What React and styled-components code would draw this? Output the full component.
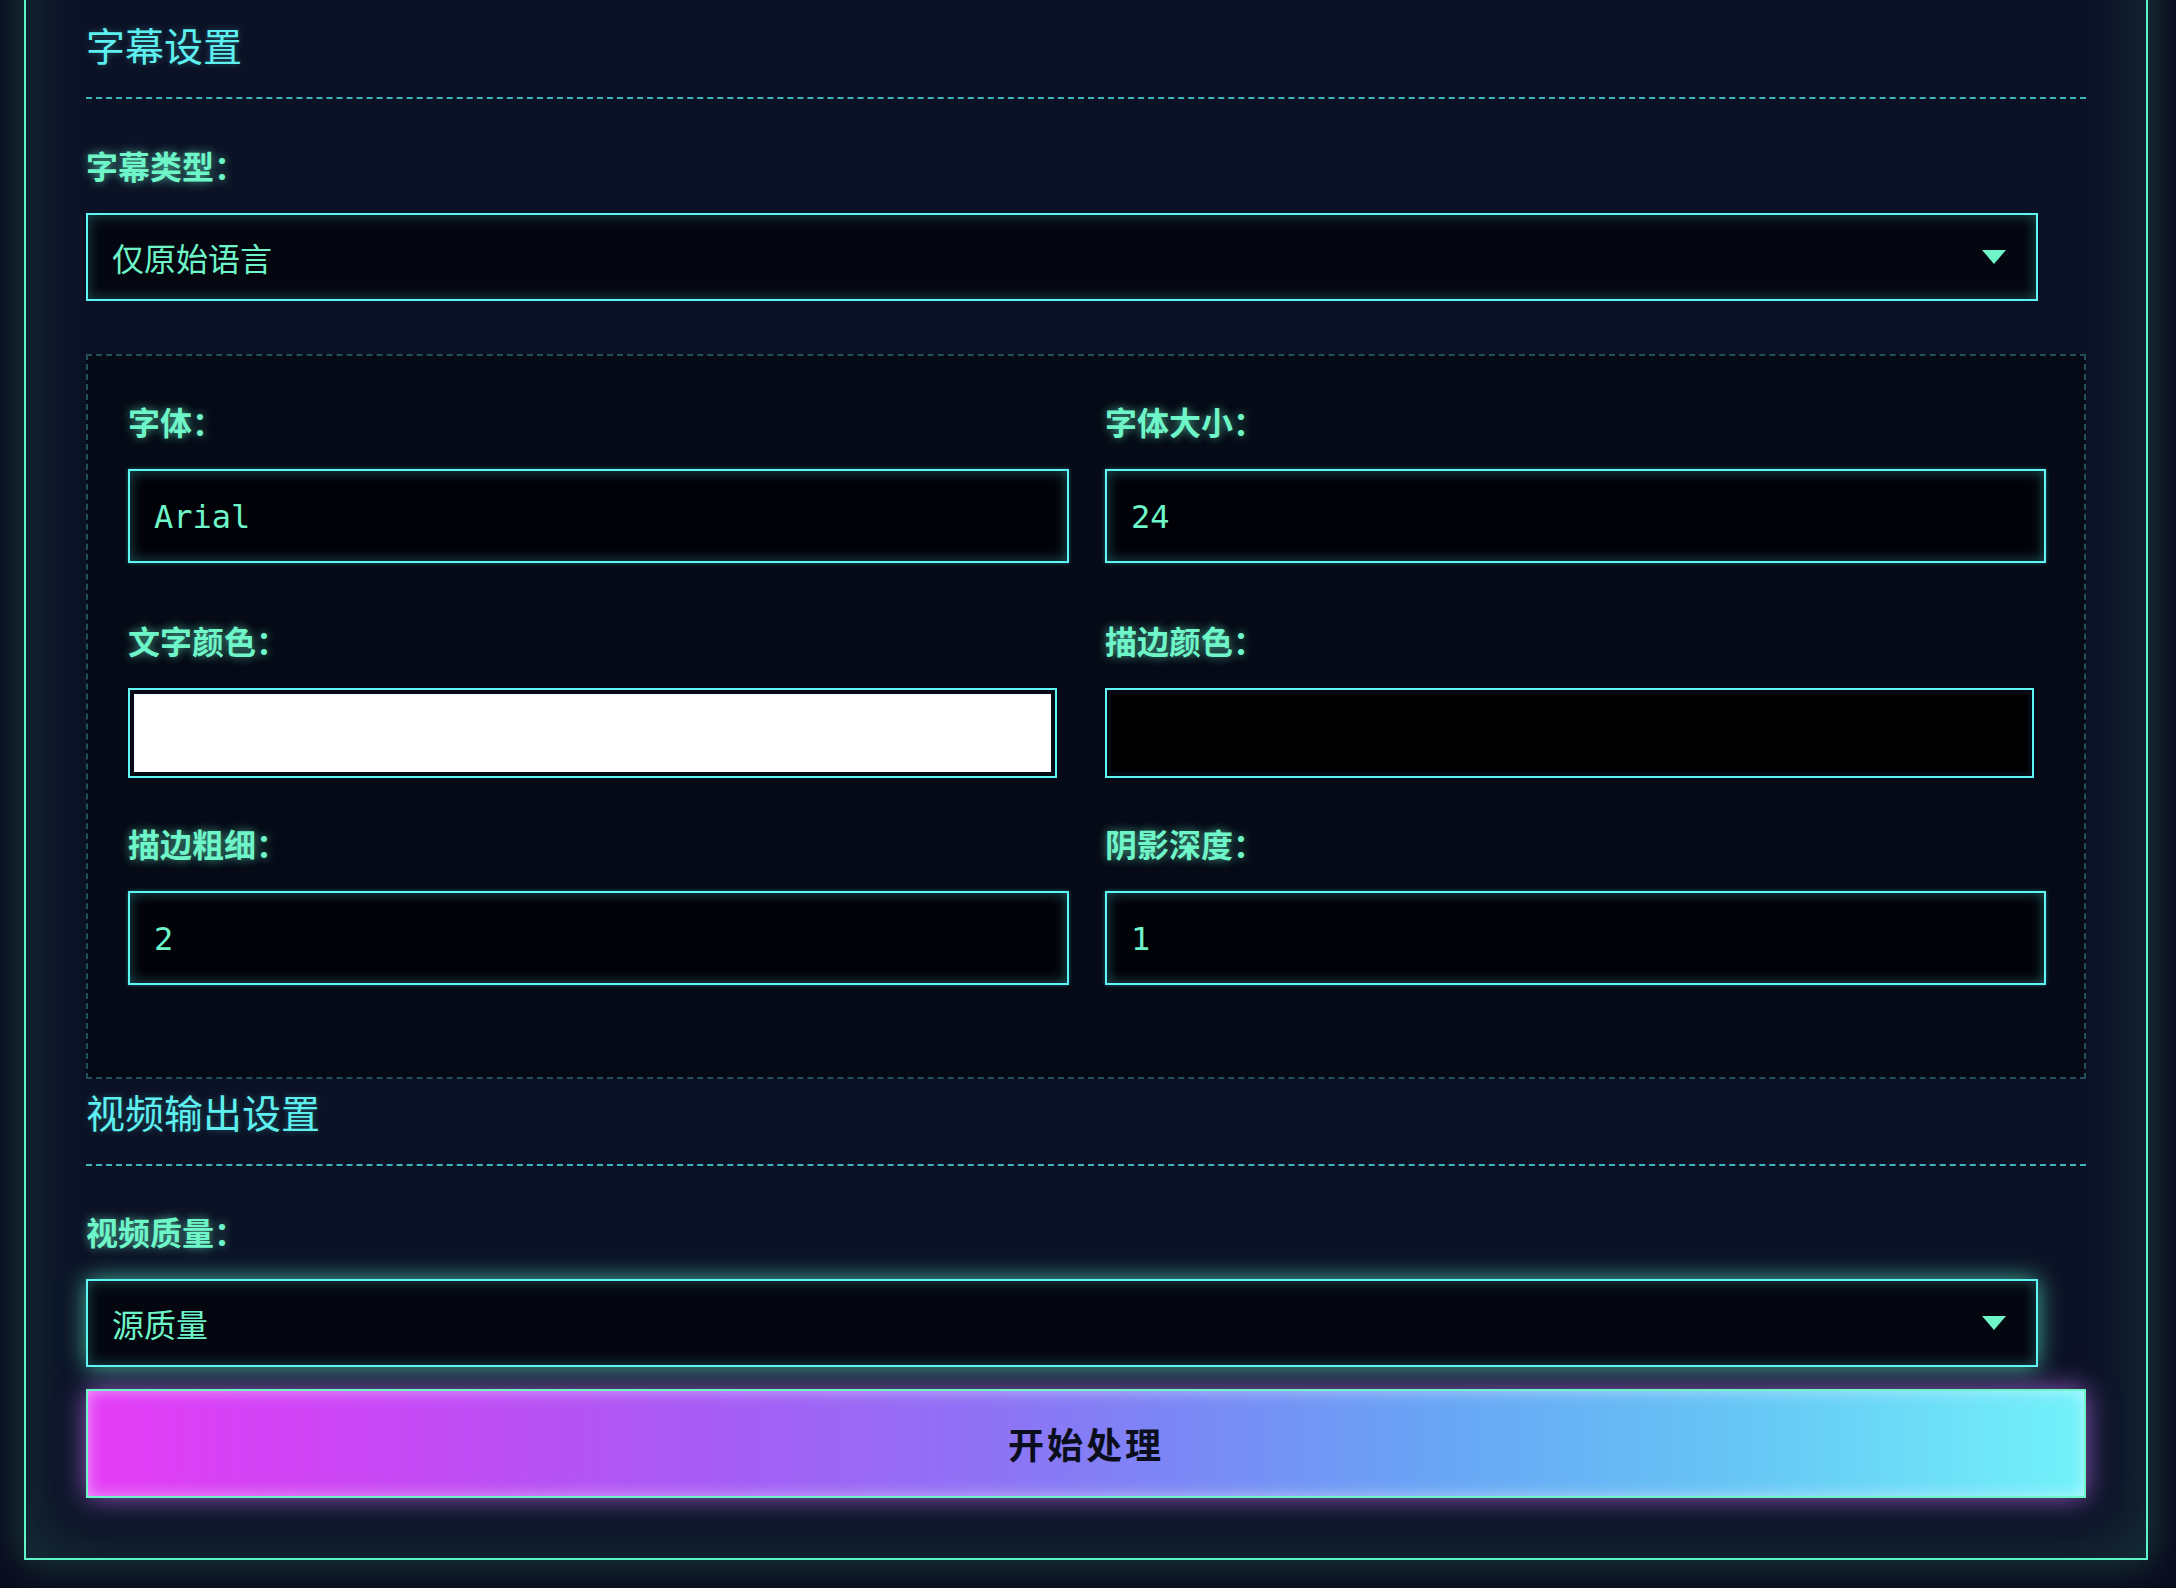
import React from "react";
import styled, { createGlobalStyle } from "styled-components";

const GlobalStyle = createGlobalStyle`
  html, body {
    margin: 0;
    padding: 0;
    background: #0a0d1e;
    overflow: hidden;
  }
  body {
    font-family: "Noto Sans CJK SC", "Noto Sans", sans-serif;
  }
  * { box-sizing: border-box; }
`;

const Page = styled.div`
  width: 2176px;
  height: 1588px;
  overflow: hidden;
  background: #0a0d1e;
  padding-left: 24px;
`;

const Panel = styled.section`
  width: 2124px;
  margin-top: -100px;
  padding: 118px 60px 60px 60px;
  border: 2px solid #5cf5c8;
  background: #0c1226;
  box-shadow: 0 0 36px rgba(92, 245, 200, 0.24),
    inset 0 0 70px rgba(92, 245, 200, 0.14);
`;

const SectionTitle = styled.h2`
  margin: ${(p) => p.$mt || 0}px 0 0 0;
  padding: 0 0 29px 0;
  font-size: 39px;
  line-height: 48px;
  font-weight: 400;
  color: #5ef0f0;
  border-bottom: 2px dashed #3db5bd;
  text-shadow: 0 0 6px rgba(94, 240, 240, 0.3);
`;

const Group = styled.div`
  display: flex;
  flex-direction: column;
  margin-top: ${(p) => p.$mt || 0}px;
  margin-bottom: ${(p) => p.$mb || 0}px;
`;

const Label = styled.label`
  display: block;
  font-size: 32px;
  line-height: 40px;
  font-weight: 700;
  color: #6ef5c8;
  margin-bottom: 28px;
  text-shadow: 0 0 10px rgba(110, 245, 200, 0.65);
`;

const Select = styled.div`
  width: calc(100% - 48px);
  height: 88px;
  display: flex;
  align-items: center;
  justify-content: space-between;
  padding: 0 30px 0 24px;
  border: 2px solid #5ef5f5;
  background: #04070f;
  color: #6ef5c8;
  font-size: 32px;
  box-shadow: inset 0 0 14px rgba(94, 245, 245, 0.28)
    ${(p) => (p.$glow ? ", 0 0 22px rgba(92, 245, 200, 0.7)" : "")};
`;

const SubBox = styled.div`
  margin-top: 53px;
  padding: 45px 38px 35px 40px;
  border: 2px dashed rgba(94, 240, 240, 0.3);
  background: #050a16;
`;

const Grid = styled.div`
  display: grid;
  grid-template-columns: 1fr 1fr;
  column-gap: 36px;
`;

const TextInput = styled.div`
  height: 94px;
  display: flex;
  align-items: center;
  padding: 2px 24px 0 24px;
  border: 2px solid #5ef5f5;
  background: #000208;
  color: #6ef5c8;
  font-family: "DejaVu Sans Mono", "Liberation Mono", monospace;
  font-size: 32px;
  box-shadow: inset 0 0 14px rgba(94, 245, 245, 0.32),
    0 0 4px rgba(94, 245, 245, 0.35);
`;

const ColorInput = styled.div`
  width: calc(100% - 12px);
  height: 90px;
  padding: 4px;
  border: 2px solid #5ef5f5;
  background: #060a14;
  display: flex;
`;

const Swatch = styled.div`
  flex: 1;
  background: ${(p) => p.$color};
`;

const StartButton = styled.button`
  display: flex;
  align-items: center;
  justify-content: center;
  width: 100%;
  height: 109px;
  margin-top: 22px;
  border: 2px solid #6ef5c8;
  background: linear-gradient(
    90deg,
    #e43cf6 0%,
    #c848f5 15%,
    #a95af5 30%,
    #8f72f5 45%,
    #7a88f5 55%,
    #68a6f5 68%,
    #66c4f5 82%,
    #72f2fa 100%
  );
  color: #0b0e1c;
  font-family: "Noto Sans CJK SC", sans-serif;
  font-size: 36px;
  font-weight: 700;
  letter-spacing: 3px;
  padding: 0 0 2px 0;
  box-shadow: 0 0 26px rgba(200, 120, 255, 0.7),
    inset 0 0 16px rgba(255, 255, 255, 0.5);
`;

const Arrow = () => (
  <svg width="24" height="14" viewBox="0 0 24 14">
    <polygon points="0,0 24,0 12,14" fill="#6ef5c8" />
  </svg>
);

const Field = ({ label, mb, children }) => (
  <Group $mb={mb}>
    <Label>{label}</Label>
    {children}
  </Group>
);

export default function App() {
  return (
    <>
      <GlobalStyle />
      <Page>
        <Panel>
          <SectionTitle>字幕设置</SectionTitle>
          <Group $mt={46}>
            <Label>字幕类型：</Label>
            <Select>
              <span>仅原始语言</span>
              <Arrow />
            </Select>
          </Group>

          <SubBox>
            <Grid>
              <Field label="字体：" mb={57}>
                <TextInput>Arial</TextInput>
              </Field>
              <Field label="字体大小：" mb={57}>
                <TextInput>24</TextInput>
              </Field>
              <Field label="文字颜色：" mb={45}>
                <ColorInput>
                  <Swatch $color="#ffffff" />
                </ColorInput>
              </Field>
              <Field label="描边颜色：" mb={45}>
                <ColorInput>
                  <Swatch $color="#000000" />
                </ColorInput>
              </Field>
              <Field label="描边粗细：" mb={57}>
                <TextInput>2</TextInput>
              </Field>
              <Field label="阴影深度：" mb={57}>
                <TextInput>1</TextInput>
              </Field>
            </Grid>
          </SubBox>

          <SectionTitle $mt={8}>视频输出设置</SectionTitle>
          <Group $mt={45}>
            <Label>视频质量：</Label>
            <Select $glow>
              <span>源质量</span>
              <Arrow />
            </Select>
          </Group>
          <StartButton>开始处理</StartButton>
        </Panel>
      </Page>
    </>
  );
}
